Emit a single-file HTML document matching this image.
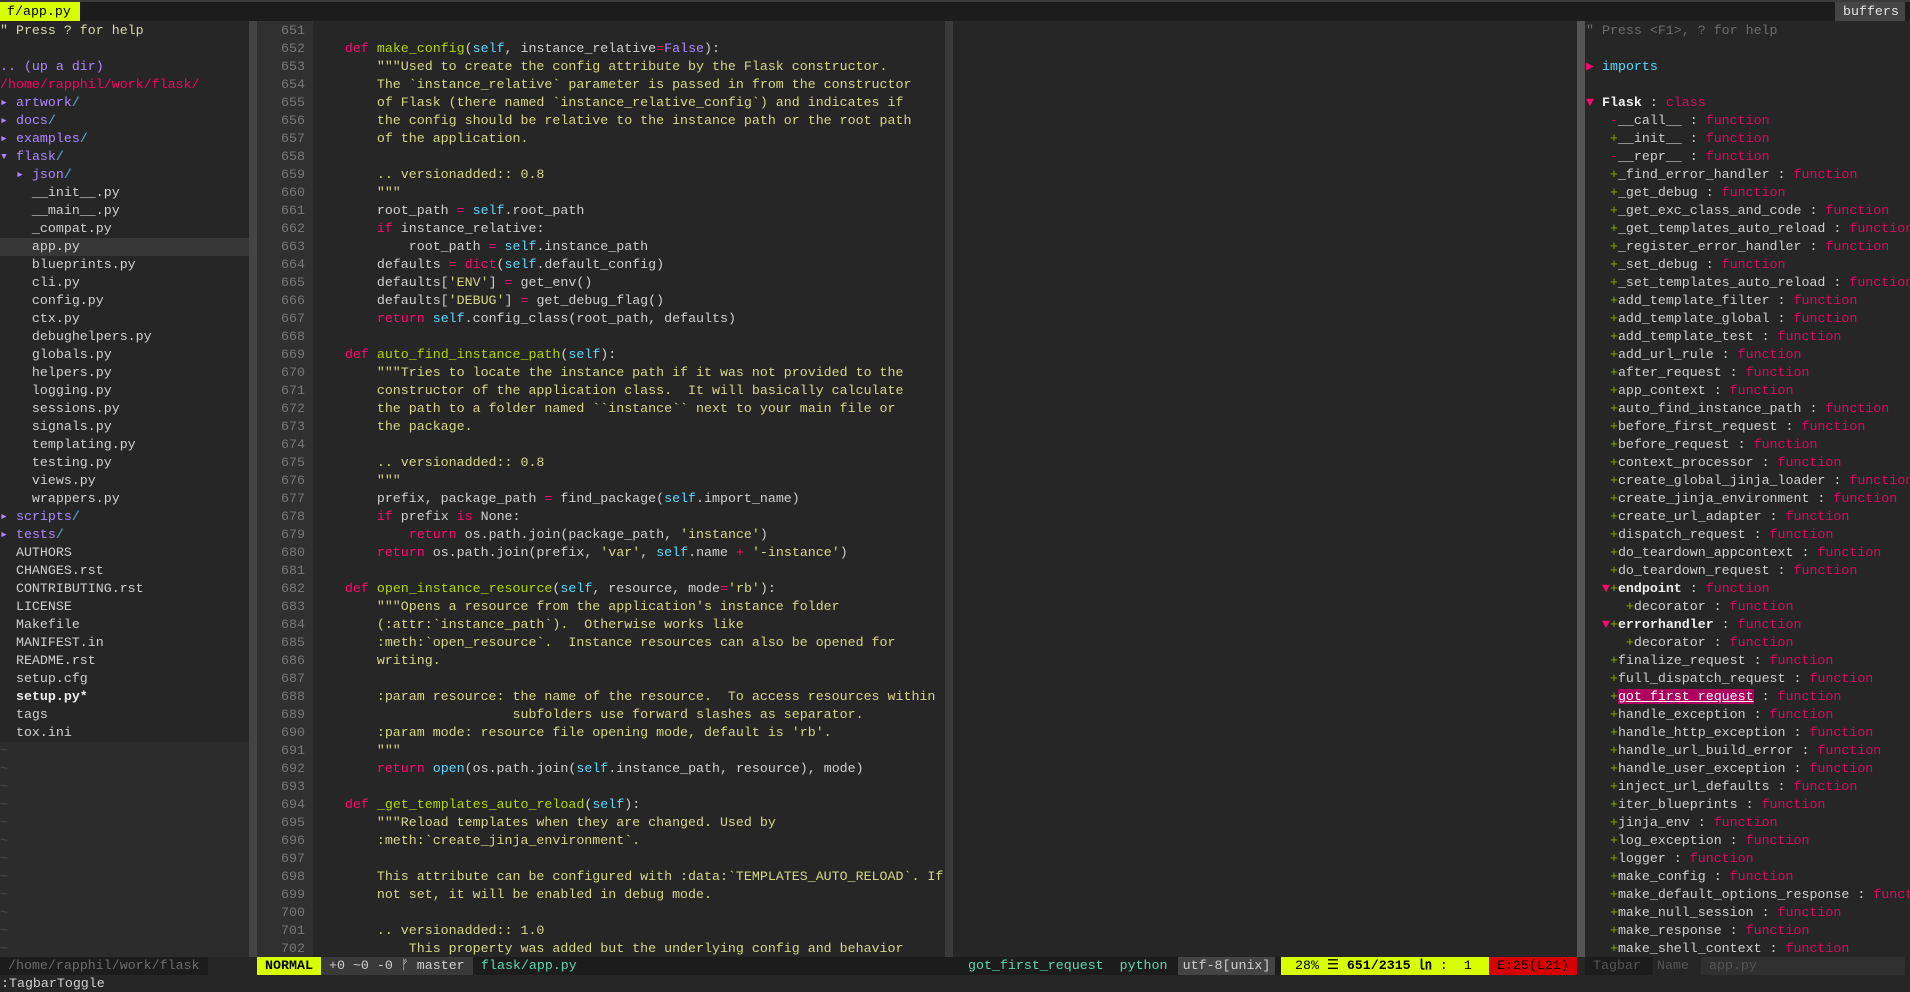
<!DOCTYPE html>
<html><head><meta charset="utf-8"><style>
*{margin:0;padding:0;box-sizing:border-box}
body{width:1910px;height:992px;background:#262626;overflow:hidden;position:relative;font-family:"Liberation Mono","DejaVu Sans Mono",monospace;font-size:13.3px;color:#d0d0d0}
.p{position:absolute;overflow:hidden}
.r{height:18px;line-height:18px;white-space:pre;overflow:hidden}
.k{color:#ff0a6c}.f{color:#afd700}.s{color:#5fd7ff}.c{color:#af87ff}.d{color:#d7d787}.g{color:#87af00}.rd{color:#d7005f}.fn{color:#e0085e}
.dir{color:#af87ff}.sl{color:#5fafd7}
</style></head><body>
<div class="p" style="left:0;top:0;width:1910px;height:21px;background:#1c1c1c;border-top:2px solid #3a3a3a"></div>
<div class="p r" style="left:0;top:2px;width:80px;height:19px;background:#d7ff00;color:#000;padding-left:7px;line-height:19px">f/app.py</div>
<div class="p r" style="left:1835px;top:2px;width:70px;height:19px;background:#444;color:#e4e4e4;padding-left:8px;line-height:19px">buffers</div>

<div class="p" style="left:0;top:22px;width:249px;height:935px;background:#262626">
<div class="r" style="color:#d7d7af">" Press ? for help</div>
<div class="r"></div>
<div class="r"><span class="dir">.. (up a dir)</span></div>
<div class="r" style="color:#ff005f">/home/rapphil/work/flask/</div>
<div class="r"><span class="dir">▸ artwork</span><span class="sl">/</span></div>
<div class="r"><span class="dir">▸ docs</span><span class="sl">/</span></div>
<div class="r"><span class="dir">▸ examples</span><span class="sl">/</span></div>
<div class="r"><span class="dir">▾ flask</span><span class="sl">/</span></div>
<div class="r"><span class="dir">  ▸ json</span><span class="sl">/</span></div>
<div class="r">    __init__.py</div>
<div class="r">    __main__.py</div>
<div class="r">    _compat.py</div>
<div class="r" style="background:#363636">    app.py</div>
<div class="r">    blueprints.py</div>
<div class="r">    cli.py</div>
<div class="r">    config.py</div>
<div class="r">    ctx.py</div>
<div class="r">    debughelpers.py</div>
<div class="r">    globals.py</div>
<div class="r">    helpers.py</div>
<div class="r">    logging.py</div>
<div class="r">    sessions.py</div>
<div class="r">    signals.py</div>
<div class="r">    templating.py</div>
<div class="r">    testing.py</div>
<div class="r">    views.py</div>
<div class="r">    wrappers.py</div>
<div class="r"><span class="dir">▸ scripts</span><span class="sl">/</span></div>
<div class="r"><span class="dir">▸ tests</span><span class="sl">/</span></div>
<div class="r">  AUTHORS</div>
<div class="r">  CHANGES.rst</div>
<div class="r">  CONTRIBUTING.rst</div>
<div class="r">  LICENSE</div>
<div class="r">  Makefile</div>
<div class="r">  MANIFEST.in</div>
<div class="r">  README.rst</div>
<div class="r">  setup.cfg</div>
<div class="r" style="font-weight:bold;color:#eee">  setup.py*</div>
<div class="r">  tags</div>
<div class="r">  tox.ini</div>
<div style="background:#2c2c2c;color:#4a4a4a">
<div class="r">~</div><div class="r">~</div><div class="r">~</div><div class="r">~</div><div class="r">~</div><div class="r">~</div><div class="r">~</div><div class="r">~</div><div class="r">~</div><div class="r">~</div><div class="r">~</div><div class="r">~</div>
</div>
</div>
<div class="p" style="left:249px;top:21px;width:8px;height:936px;background:#444"></div>
<div class="p" style="left:945px;top:21px;width:8px;height:936px;background:#3a3a3a"></div>
<div class="p" style="left:1577px;top:21px;width:8px;height:936px;background:#555"></div>

<div class="p" style="left:257px;top:21px;width:56px;height:936px;background:#303030"></div>
<div class="p" style="left:257px;top:22px;width:56px;height:935px;color:#787878;text-align:right;padding-right:8px" id="ln"></div>

<div class="p" style="left:313px;top:22px;width:632px;height:935px">
<div class="r"></div>
<div class="r">    <span class="k">def</span> <span class="f">make_config</span>(<span class="s">self</span>, instance_relative<span class="k">=</span><span class="c">False</span>):</div>
<div class="r d">        """Used to create the config attribute by the Flask constructor.</div>
<div class="r d">        The `instance_relative` parameter is passed in from the constructor</div>
<div class="r d">        of Flask (there named `instance_relative_config`) and indicates if</div>
<div class="r d">        the config should be relative to the instance path or the root path</div>
<div class="r d">        of the application.</div>
<div class="r"></div>
<div class="r d">        .. versionadded:: 0.8</div>
<div class="r d">        """</div>
<div class="r">        root_path <span class="k">=</span> <span class="s">self</span>.root_path</div>
<div class="r">        <span class="k">if</span> instance_relative:</div>
<div class="r">            root_path <span class="k">=</span> <span class="s">self</span>.instance_path</div>
<div class="r">        defaults <span class="k">=</span> <span class="k">dict</span>(<span class="s">self</span>.default_config)</div>
<div class="r">        defaults[<span class="d">'ENV'</span>] <span class="k">=</span> get_env()</div>
<div class="r">        defaults[<span class="d">'DEBUG'</span>] <span class="k">=</span> get_debug_flag()</div>
<div class="r">        <span class="k">return</span> <span class="s">self</span>.config_class(root_path, defaults)</div>
<div class="r"></div>
<div class="r">    <span class="k">def</span> <span class="f">auto_find_instance_path</span>(<span class="s">self</span>):</div>
<div class="r d">        """Tries to locate the instance path if it was not provided to the</div>
<div class="r d">        constructor of the application class.  It will basically calculate</div>
<div class="r d">        the path to a folder named ``instance`` next to your main file or</div>
<div class="r d">        the package.</div>
<div class="r"></div>
<div class="r d">        .. versionadded:: 0.8</div>
<div class="r d">        """</div>
<div class="r">        prefix, package_path <span class="k">=</span> find_package(<span class="s">self</span>.import_name)</div>
<div class="r">        <span class="k">if</span> prefix <span class="k">is</span> None:</div>
<div class="r">            <span class="k">return</span> os.path.join(package_path, <span class="d">'instance'</span>)</div>
<div class="r">        <span class="k">return</span> os.path.join(prefix, <span class="d">'var'</span>, <span class="s">self</span>.name <span class="k">+</span> <span class="d">'-instance'</span>)</div>
<div class="r"></div>
<div class="r">    <span class="k">def</span> <span class="f">open_instance_resource</span>(<span class="s">self</span>, resource, mode<span class="k">=</span><span class="d">'rb'</span>):</div>
<div class="r d">        """Opens a resource from the application's instance folder</div>
<div class="r d">        (:attr:`instance_path`).  Otherwise works like</div>
<div class="r d">        :meth:`open_resource`.  Instance resources can also be opened for</div>
<div class="r d">        writing.</div>
<div class="r"></div>
<div class="r d">        :param resource: the name of the resource.  To access resources within</div>
<div class="r d">                         subfolders use forward slashes as separator.</div>
<div class="r d">        :param mode: resource file opening mode, default is 'rb'.</div>
<div class="r d">        """</div>
<div class="r">        <span class="k">return</span> <span class="s">open</span>(os.path.join(<span class="s">self</span>.instance_path, resource), mode)</div>
<div class="r"></div>
<div class="r">    <span class="k">def</span> <span class="f">_get_templates_auto_reload</span>(<span class="s">self</span>):</div>
<div class="r d">        """Reload templates when they are changed. Used by</div>
<div class="r d">        :meth:`create_jinja_environment`.</div>
<div class="r"></div>
<div class="r d">        This attribute can be configured with :data:`TEMPLATES_AUTO_RELOAD`. If</div>
<div class="r d">        not set, it will be enabled in debug mode.</div>
<div class="r"></div>
<div class="r d">        .. versionadded:: 1.0</div>
<div class="r d">            This property was added but the underlying config and behavior</div>
</div>

<div class="p" style="left:1586px;top:22px;width:324px;height:935px" id="tb"><div class="r" style="color:#6c6c6c">" Press &lt;F1&gt;, ? for help</div><div class="r"></div><div class="r"><span class="k">▶</span> <span class="s">imports</span></div><div class="r"></div><div class="r"><span class="k">▼</span> <b style="color:#eee">Flask</b> : <span class="fn">class</span></div></div>

<div class="p" style="left:0;top:957px;width:1910px;height:18px;background:#262626"></div>
<div class="p r" style="left:0;top:957px;width:208px;background:#1c1c1c;color:#6c6c6c;padding-left:8px">/home/rapphil/work/flask</div>
<div class="p r" style="left:257px;top:957px;width:1320px;background:#1c1c1c"></div>
<div class="p r" style="left:257px;top:957px;width:64px;background:#d7ff00;color:#000;font-weight:bold;text-align:center">NORMAL</div>
<div class="p r" style="left:321px;top:957px;width:152px;background:#3a3a3a;color:#d0d0d0;padding-left:8px">+0 ~0 -0 ᚠ master</div>
<div class="p r" style="left:481px;top:957px;color:#5fd7af">flask/app.py</div>
<div class="p r" style="left:968px;top:957px;color:#5fd7af">got_first_request  python</div>
<div class="p r" style="left:1178px;top:957px;width:97px;background:#444;color:#d0d0d0;text-align:center">utf-8[unix]</div>
<div class="p r" style="left:1281px;top:957px;width:208px;background:#d7ff00;color:#000;padding-left:14px"><span>28% ☰ </span><b>651/2315</b> <b>㏑</b> :  1</div>
<div class="p r" style="left:1489px;top:957px;width:88px;background:#d70000;color:#000;text-align:center">E:25(L21)</div>
<div class="p r" style="left:1585px;top:957px;width:68px;background:#1c1c1c;color:#555;padding-left:8px">Tagbar</div>
<div class="p r" style="left:1653px;top:957px;width:48px;background:#262626;color:#555;padding-left:4px">Name</div>
<div class="p r" style="left:1701px;top:957px;width:204px;background:#303030;color:#555;padding-left:8px">app.py</div>
<div class="p r" style="left:0;top:975px;width:1910px;height:17px;background:#262626;color:#d0d0d0;padding-left:1px">:TagbarToggle</div>

<script>
var ln=document.getElementById('ln'),h='';
for(var i=651;i<=702;i++)h+='<div class="r">'+i+'</div>';
ln.innerHTML=h;
var items=[['-','__call__'],['+','__init__'],['-','__repr__'],['+','_find_error_handler'],['+','_get_debug'],['+','_get_exc_class_and_code'],['+','_get_templates_auto_reload'],['+','_register_error_handler'],['+','_set_debug'],['+','_set_templates_auto_reload'],['+','add_template_filter'],['+','add_template_global'],['+','add_template_test'],['+','add_url_rule'],['+','after_request'],['+','app_context'],['+','auto_find_instance_path'],['+','before_first_request'],['+','before_request'],['+','context_processor'],['+','create_global_jinja_loader'],['+','create_jinja_environment'],['+','create_url_adapter'],['+','dispatch_request'],['+','do_teardown_appcontext'],['+','do_teardown_request'],['E','endpoint'],['D','decorator'],['E','errorhandler'],['D','decorator'],['+','finalize_request'],['+','full_dispatch_request'],['H','got_first_request'],['+','handle_exception'],['+','handle_http_exception'],['+','handle_url_build_error'],['+','handle_user_exception'],['+','inject_url_defaults'],['+','iter_blueprints'],['+','jinja_env'],['+','log_exception'],['+','logger'],['+','make_config'],['+','make_default_options_response'],['+','make_null_session'],['+','make_response'],['+','make_shell_context']];
var tb=document.getElementById('tb'),t='';
items.forEach(function(it){
 var m=it[0],n=it[1],s;
 if(m=='-')s='   <span class="rd">-</span>'+n;
 else if(m=='+')s='   <span class="g">+</span>'+n;
 else if(m=='E')s='  <span class="k">▼</span><span class="g">+</span><b style="color:#eee">'+n+'</b>';
 else if(m=='D')s='     <span class="g">+</span>'+n;
 else s='   <span class="g">+</span><span style="background:#af005f;color:#fff;text-decoration:underline">'+n+'</span>';
 t+='<div class="r">'+s+' : <span class="fn">function</span></div>';
});
tb.innerHTML+=t;
</script>
</body></html>
